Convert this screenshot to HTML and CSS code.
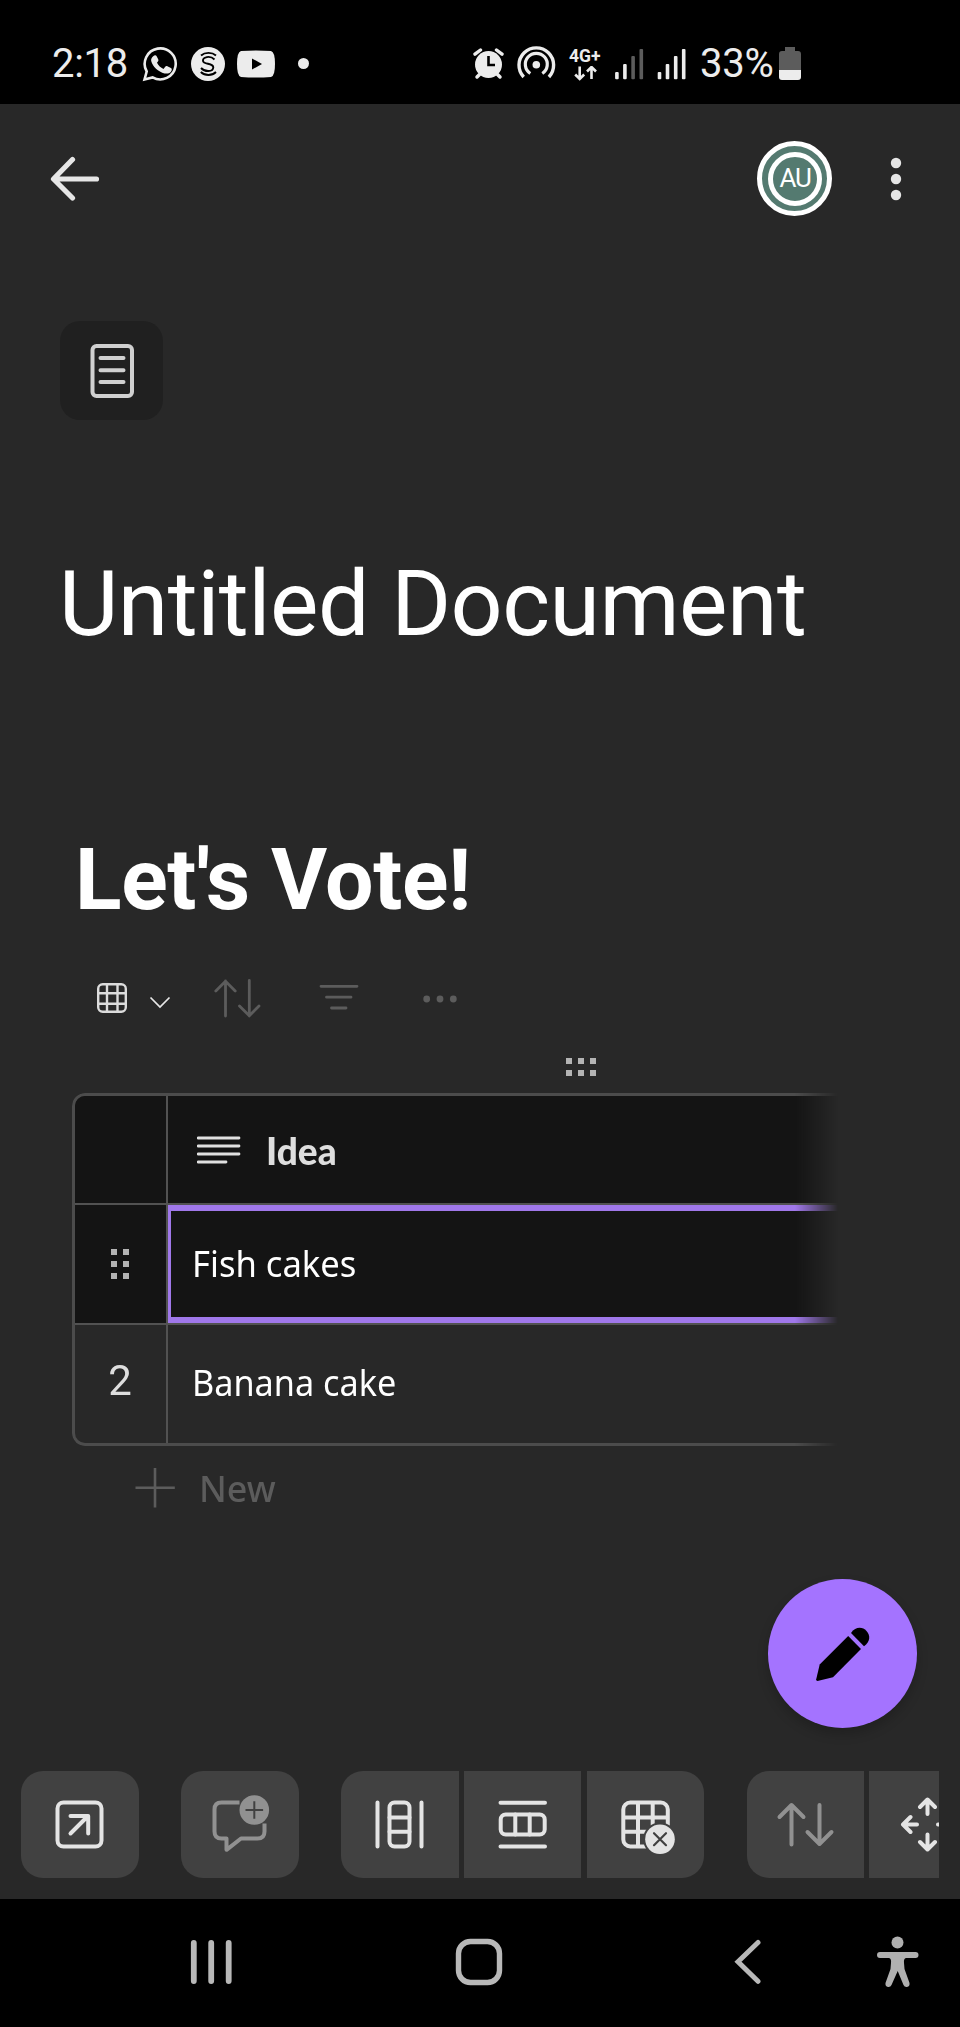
FILE: index.html
```html
<!DOCTYPE html>
<html lang="en">
<head>
<meta charset="utf-8">
<title>Untitled Document</title>
<link rel="stylesheet" href="styles.css">
</head>
<body>
<div class="screen">
  <header class="status">
    <div class="status-left">
      <span class="clock">2:18</span>
      <svg class="ic-whatsapp" width="36" height="36" viewBox="142 46 36 36"><path d="M144.500 79.500L146.700 71.500A15.500 15.500 0 1 1 152.600 77.400Z" fill="none" stroke="#ececec" stroke-width="2.600"/><path d="M153.200 56.200c1.400-1.400 2.800-1.300 3.600.2l1.500 3.200c.4 1-.1 1.700-1.300 3.100 1.500 2.900 3.600 4.900 6.500 6.200l1.900-2.300c.6-.7 1.200-.8 2-.4l3.500 1.800c1 .5 1.100 1.200.7 2.400-1 2.700-4.300 3.700-7 3-6.400-1.700-12-7-13.400-12.500-.4-1.800.5-3.400 2-4.700z" fill="#ececec"/></svg>
      <svg class="ic-s" width="34" height="34" viewBox="191 47 34 34"><circle cx="208" cy="64" r="17" fill="#ececec"/><path d="M201 55.500C205 52 212 52 216 55.500M200.800 72C205 76 212 76 216 72M214.500 59.500C210 55 202.500 57 203 61C203.500 65 213.500 62.500 213.300 67.500C213 72 205 72.300 201 68" fill="none" stroke="#000" stroke-width="1.900"/></svg>
      <svg class="ic-yt" width="38" height="28" viewBox="237 50 38 28"><path d="M241 51Q256 50 271 51Q275 52 275 64Q275 76 271 77Q256 78 241 77Q237 76 237 64Q237 52 241 51Z" fill="#ececec"/><path d="M252 58.500V69.500L262 64Z" fill="#000"/></svg>
      <span class="more-dot"></span>
    </div>
    <div class="status-right">
      <svg class="ic-alarm" width="32" height="32" viewBox="473 48 32 32"><circle cx="488.500" cy="64.500" r="13.500" fill="#ececec"/><path d="M479.500 74.500L477 77M497.500 74.500L500 77" stroke="#ececec" stroke-width="3.500" stroke-linecap="round"/><path d="M475 54.200L480.500 50M502 54.200L496.500 50" stroke="#ececec" stroke-width="3.400" stroke-linecap="round"/><path d="M488.500 56V65H495" fill="none" stroke="#000" stroke-width="2.600"/></svg>
      <svg class="ic-hotspot" width="40" height="36" viewBox="516 46 40 36"><circle cx="536.300" cy="65.700" r="3.800" fill="#ececec"/><path d="M530.300 74.500A11 11 0 1 1 542.300 74.500" fill="none" stroke="#ececec" stroke-width="3.200"/><path d="M523.700 78A17.300 17.300 0 1 1 548.900 78" fill="none" stroke="#ececec" stroke-width="3.400"/></svg>
      <div class="net"><span class="net-label">4G+</span><svg width="24" height="15" viewBox="573 66 24 15"><path d="M579.700 66.500V78.500M575.200 74.500L579.700 79L584.200 74.500M591.500 79V67.500M587 71.500L591.500 67L596 71.500" fill="none" stroke="#ececec" stroke-width="2.600"/></svg></div>
      <svg class="ic-sig1" width="29" height="32" viewBox="614.500 47 29 32" fill="#ececec"><rect x="614.600" y="71" width="3.600" height="7.300" rx="1"/><rect x="622.600" y="63" width="3.600" height="15.300" rx="1"/><g fill="#5c5c5c"><rect x="630.800" y="55" width="3.600" height="23.300" rx="1"/><rect x="639" y="48" width="3.600" height="30.300" rx="1"/></g></svg>
      <svg class="ic-sig2" width="29" height="32" viewBox="656.500 47 29 32" fill="#ececec"><rect x="657.200" y="71" width="3.600" height="7.300" rx="1"/><rect x="665.200" y="63" width="3.600" height="15.300" rx="1"/><rect x="673.400" y="55" width="3.600" height="23.300" rx="1"/><rect x="681.400" y="48" width="3.600" height="30.300" rx="1"/></svg>
      <span class="percent">33%</span>
      <svg class="ic-bat" width="22" height="33" viewBox="779 47 22 33"><path d="M785 47H795V51H798Q801 51 801 54V70H779V54Q779 51 782 51H785Z" fill="#5c5c5c"/><path d="M779 70H801V77Q801 80 798 80H782Q779 80 779 77Z" fill="#ececec"/></svg>
    </div>
  </header>

  <div class="appbar">
    <svg class="back" width="50" height="46" viewBox="50 156 50 46"><path d="M96.500 179H54M72.500 159.500L53.500 179L72.500 198" fill="none" stroke="#e6e6e6" stroke-width="5.200" stroke-linecap="round" stroke-linejoin="round"/></svg>
    <div class="avatar"><div class="avatar-in">AU</div></div>
    <svg class="kebab" width="12" height="44" viewBox="890 157 12 44" fill="#e6e6e6"><circle cx="896" cy="163" r="5.200"/><circle cx="896" cy="179" r="5.200"/><circle cx="896" cy="195" r="5.200"/></svg>
  </div>

  <main class="doc">
    <div class="doc-icon"><svg width="44" height="54" viewBox="90 344 44 54"><rect x="92.500" y="346" width="39.500" height="50" rx="4" fill="none" stroke="#d0d0d0" stroke-width="4"/><path d="M100.500 358H123.500M100.500 370.200H123.500M100.500 382H123.500" stroke="#d0d0d0" stroke-width="4" stroke-linecap="round"/></svg></div>
    <h1 class="title">Untitled Document</h1>
    <h2 class="heading">Let's Vote!</h2>

    <div class="tools">
      <svg class="t-grid" width="30" height="30" viewBox="97 983 30 30" fill="none" stroke="#dcdcdc" stroke-width="2.400"><rect x="98.200" y="984.200" width="27.600" height="27.600" rx="4.500"/><path d="M107 984V1012M117.500 984V1012M98 993.200H126M98 1003.700H126"/></svg>
      <svg class="t-chev" width="22" height="13" viewBox="149 995.500 22 13"><path d="M150.500 997L160 1006.500L169.500 997" fill="none" stroke="#e8e8e8" stroke-width="1.700"/></svg>
      <svg class="t-sort" width="48" height="40" viewBox="214 979 48 40"><path d="M225.500 1016V981M215.800 991L225.500 981.300L235.200 991M249.300 980.500V1016M239.500 1006L249.300 1015.700L259 1006" fill="none" stroke="#5c5c5c" stroke-width="2.800" stroke-linecap="round" stroke-linejoin="round"/></svg>
      <svg class="t-filter" width="40" height="26" viewBox="319 984 40 26"><path d="M321 986.300H357M326.500 997.200H351M331.500 1008H346" stroke="#5c5c5c" stroke-width="2.800" stroke-linecap="round"/></svg>
      <svg class="t-more" width="36" height="8" viewBox="422 994.500 36 8" fill="#5c5c5c"><circle cx="426.700" cy="998.500" r="3.400"/><circle cx="440" cy="998.500" r="3.400"/><circle cx="453.300" cy="998.500" r="3.400"/></svg>
    </div>

    <div class="col-handle"><i></i><i></i><i></i><i></i><i></i><i></i></div>

    <div class="table">
      <div class="row head">
        <div class="num"></div>
        <div class="cell"><svg class="lines" width="44" height="28" viewBox="197 1136.500 44 28"><path d="M198 1138.500H239M198 1146.500H239M198 1154.500H239M198 1162.500H226" stroke="#e0e0e0" stroke-width="2.800" stroke-linecap="round"/></svg><span class="label">Idea</span></div>
      </div>
      <div class="row active">
        <div class="num"><div class="row-handle"><i></i><i></i><i></i><i></i><i></i><i></i></div></div>
        <div class="cell selected"><span class="fish">Fish cakes</span></div>
      </div>
      <div class="row last">
        <div class="num"><span>2</span></div>
        <div class="cell"><span class="banana">Banana cake</span></div>
      </div>
    </div>

    <div class="new-row"><svg width="40" height="42" viewBox="135 1467 40 42"><path d="M135.500 1487.700H174.800M155 1468V1507.500" stroke="#5c5c5c" stroke-width="2.600"/></svg><span>New</span></div>
  </main>

  <div class="fab"><svg width="56" height="56" viewBox="815 1625 56 56"><path d="M848.200 1635L861 1648L833 1676.300L817.500 1680Q816 1680 816.200 1678.300L819.700 1663.500Z"/><path d="M851 1632C855.500 1625.500 862.500 1625.500 866.500 1630C870.500 1634.500 870.500 1640.500 864 1645.300Z"/></svg></div>

  <div class="actions">
    <div class="btn solo"><svg width="117" height="107" viewBox="21.500 1770.500 117 107" fill="none" stroke="#e4e4e4" stroke-width="4" stroke-linecap="round" stroke-linejoin="round"><rect x="58" y="1802" width="44" height="44" rx="6"/><path d="M71 1815.500H88.700V1833M88 1816L71 1833"/></svg></div>
    <div class="btn solo"><svg width="117" height="107" viewBox="181.500 1770.500 117 107" fill="none" stroke="#919191" stroke-width="4" stroke-linejoin="round"><path d="M240 1802H222Q215 1802 215 1809V1831Q215 1838 222 1838H227V1849.300L241.500 1838H258Q265 1838 265 1831V1823"/><circle cx="254.800" cy="1809.500" r="14.800" fill="#919191" stroke="none"/><path d="M246 1809.500H263.600M254.800 1800.700V1818.300" stroke="#414141" stroke-width="2"/></svg></div>
    <div class="group">
      <div class="btn first"><svg width="117" height="107" viewBox="341.500 1770.500 117 107" fill="none" stroke="#e4e4e4" stroke-width="4" stroke-linecap="round"><path d="M378 1802V1846M422 1802V1846M390 1817H410M390 1831.300H410"/><rect x="390" y="1802" width="20" height="44" rx="5"/></svg></div>
      <div class="btn"><svg width="117" height="107" viewBox="464 1770.500 117 107" fill="none" stroke="#e4e4e4" stroke-width="4" stroke-linecap="round"><path d="M500.500 1802.200H545M500.500 1846H545M515.300 1814V1834M529.700 1814V1834"/><rect x="500.700" y="1814" width="44" height="20" rx="5"/></svg></div>
      <div class="btn last"><svg width="117" height="107" viewBox="587 1770.500 117 107" fill="none" stroke="#e4e4e4" stroke-width="4"><rect x="623.300" y="1802" width="44.500" height="44" rx="7"/><path d="M638 1802V1846M652.700 1802V1846M623.300 1817H667.800M623.300 1831.300H667.800"/><circle cx="660" cy="1838.700" r="16.800" fill="#414141" stroke="none"/><circle cx="660" cy="1838.700" r="14.800" fill="#e4e4e4" stroke="none"/><path d="M654 1832.700L666 1844.700M666 1832.700L654 1844.700" stroke="#414141" stroke-width="2.200" stroke-linecap="round"/></svg></div>
    </div>
    <div class="group">
      <div class="btn first"><svg width="117" height="107" viewBox="747 1770.500 117 107" fill="none" stroke="#919191" stroke-width="4" stroke-linecap="round" stroke-linejoin="round"><path d="M791.500 1844V1805M779.500 1816.500L791.500 1804.500L803.500 1816.500M819.500 1804.500V1843M807.500 1831.500L819.500 1843.500L831.500 1831.500"/></svg></div>
      <div class="btn"><svg width="117" height="107" viewBox="869.500 1770.500 117 107" fill="none" stroke="#e4e4e4" stroke-width="4" stroke-linecap="round" stroke-linejoin="round"><path d="M928 1813.500V1799.500M920.500 1806.500L928 1799L935.500 1806.500M928 1834V1848.500M920.500 1841.500L928 1849L935.500 1841.500M917.500 1824H904M911 1816.500L903.500 1824L911 1831.500M938.500 1824H952M945 1816.500L952.500 1824L945 1831.500"/></svg></div>
    </div>
  </div>

  <nav class="nav">
    <svg class="n-recent" width="42" height="46" viewBox="189.500 1939 42 46"><path d="M193.300 1943V1981M210.700 1943V1981M228.200 1943V1981" stroke="#b8b8b8" stroke-width="5.800" stroke-linecap="round"/></svg>
    <svg class="n-home" width="48" height="48" viewBox="455 1938 48 48"><rect x="458.500" y="1941.500" width="41" height="41" rx="12" fill="none" stroke="#b8b8b8" stroke-width="5.400"/></svg>
    <svg class="n-back" width="28" height="46" viewBox="734 1939 28 46"><path d="M758 1942.500L738 1961.800L758 1981.300" fill="none" stroke="#b8b8b8" stroke-width="5" stroke-linecap="round"/></svg>
    <svg class="n-access" width="42" height="52" viewBox="877 1937 42 52" fill="#b0b0b0"><circle cx="897.500" cy="1943.500" r="6"/><path d="M880 1953H915.500A3 3 0 0 1 915.500 1959H906Q903.500 1959.500 904 1964L904.500 1970L909.500 1984Q910 1987.500 907 1988Q904.500 1988.300 903.500 1986L897.700 1972L891.500 1986Q890.500 1988.300 888 1988Q885 1987.500 885.500 1984L890.500 1970L891 1964Q891.500 1959.500 889 1959H880A3 3 0 0 1 880 1953Z"/></svg>
  </nav>
</div>
</body>
</html>
```
FILE: styles.css
```css
* { box-sizing: border-box; }
body { margin: 0; background: #282828; }
svg { display: block; flex: none; }

.screen {
  position: relative;
  width: 960px;
  height: 2027px;
  overflow: hidden;
  background: #282828;
  color: #fff;
  font-family: Roboto, "Liberation Sans", sans-serif;
}

.status {
  display: flex;
  justify-content: space-between;
  height: 104px;
  padding: 0 159px 0 52px;
  background: #000;
  color: #ececec;
}
.status-left, .status-right { display: flex; align-items: center; height: 127px; }
.clock, .percent { font-size: 40px; line-height: 46px; }
.clock { width: 90px; letter-spacing: -0.3px; }
.ic-s { margin-left: 13px; }
.ic-yt { margin-left: 12px; }
.more-dot { width: 11px; height: 11px; margin-left: 23px; border-radius: 50%; background: #ececec; }
.ic-hotspot { margin: -2px 0 0 11px; }
.net { display: flex; flex-direction: column; width: 34px; margin-left: 13px; }
.net svg { margin: 1px 0 0 4px; }
.net-label { font-size: 17.5px; font-weight: 700; line-height: 18px; white-space: nowrap; }
.ic-sig1 { margin-left: 11.5px; }
.ic-sig2 { margin-left: 13px; }
.percent { width: 79px; margin-left: 14.5px; letter-spacing: -0.2px; }

.appbar { display: flex; align-items: center; height: 150px; padding: 0 58px 0 50px; }
.avatar {
  display: flex;
  align-items: center;
  justify-content: center;
  width: 75px;
  height: 75px;
  margin: -1px 58px 0 auto;
  border: 5px solid #fff;
  border-radius: 50%;
  background: #547a70;
}
.avatar-in {
  width: 54px;
  height: 54px;
  padding-left: 1px;
  border: 5.5px solid #fff;
  border-radius: 50%;
  font-size: 26px;
  font-weight: 400;
  line-height: 43px;
  text-align: center;
  letter-spacing: -1.4px;
}

.doc { display: flex; flex-direction: column; height: 1516px; padding: 67px 0 0 60px; }
.doc-icon {
  display: flex;
  width: 103px;
  height: 99px;
  padding: 23px 0 0 30px;
  border-radius: 20px;
  background: #202020;
}
.title { margin: 129px 0 0 -1px; font-size: 91.400px; font-weight: 400; line-height: 110px; letter-spacing: -0.5px; white-space: nowrap; }
.heading { margin: 171px 0 0 15px; font-size: 86px; font-weight: 700; line-height: 100px; letter-spacing: -0.3px; white-space: nowrap; }

.tools { display: flex; align-items: center; height: 40px; margin: 49px 0 0 37px; }
.t-grid { margin-top: -2px; }
.t-chev { margin: 6px 0 0 22px; }
.t-sort { margin-left: 43px; }
.t-filter { margin: -4px 0 0 57px; }
.t-more { margin: -1px 0 0 63px; }

.col-handle, .row-handle { display: grid; gap: 6px; }
.col-handle { grid-template-columns: repeat(3, 6px); margin: 39px 0 0 506px; }
.row-handle { grid-template-columns: repeat(2, 6px); }
.col-handle i, .row-handle i { width: 6px; height: 6px; background: #b4b4b4; }

.table {
  width: 770px;
  height: 353px;
  margin: 17px 0 0 12px;
  border: 3px solid #4c4c4c;
  border-right: 0;
  border-radius: 13px 0 0 13px;
  overflow: hidden;
  -webkit-mask-image: linear-gradient(to right, #000 723px, transparent 766px);
  mask-image: linear-gradient(to right, #000 723px, transparent 766px);
}
.row { display: flex; height: 120px; border-bottom: 2px solid #525252; }
.row.head { height: 109px; background: #141414; }
.row.active { background: #141414; }
.row.last { height: 118px; border-bottom: 0; }
.num {
  display: flex;
  align-items: center;
  justify-content: center;
  width: 93px;
  padding-right: 1px;
  border-right: 2px solid #525252;
  color: #dedede;
  font-size: 42px;
}
.num span { padding-bottom: 7px; }
.cell {
  display: flex;
  align-items: center;
  flex: 1;
  padding: 0 0 5px 24px;
  font-family: "Noto Sans", "Open Sans", sans-serif;
  font-size: 37px;
}
.head .cell { padding-bottom: 0; }
.cell span { transform-origin: left center; white-space: nowrap; }
.selected { padding: 0 0 4px 21px; border: solid #a078ea; border-width: 6px 0 6px 3px; }
.lines { margin-left: 5px; }
.label { margin: 2px 0 0 25px; color: #dedede; font-family: Lato, "Open Sans", sans-serif; font-size: 37px; font-weight: 900; }
.fish { transform: scaleX(.935); }
.banana { transform: scaleX(.925); }

.new-row {
  display: flex;
  align-items: center;
  height: 42px;
  margin: 21px 0 0 75px;
  color: #5c5c5c;
  font-family: "Noto Sans", "Open Sans", sans-serif;
  font-size: 37px;
  line-height: 42px;
}
.new-row span { margin: 0 0 1px 24px; transform: scaleX(.97); transform-origin: left center; font-weight: 500; }

.fab {
  position: absolute;
  right: 43px;
  top: 1579px;
  display: flex;
  align-items: center;
  justify-content: center;
  width: 149px;
  height: 149px;
  border-radius: 50%;
  background: #a473ff;
  box-shadow: 0 6px 12px rgba(0, 0, 0, .2);
}

.actions {
  display: flex;
  gap: 42.667px;
  width: 939px;
  height: 129px;
  padding: 1px 0 0 21.333px;
  overflow: hidden;
}
.group { display: flex; flex: none; gap: 5.333px; }
.btn { flex: none; width: 117.333px; height: 107px; background: #414141; }
.solo { border-radius: 22px; }
.first { border-radius: 22px 0 0 22px; }
.last.btn { border-radius: 0 22px 22px 0; }

.nav { display: flex; align-items: center; height: 128px; padding: 0 0 2px 189.500px; background: #000; }
.n-home { margin-left: 223.500px; }
.n-back { margin-left: 231px; }
.n-access { margin-left: 115px; }
```
